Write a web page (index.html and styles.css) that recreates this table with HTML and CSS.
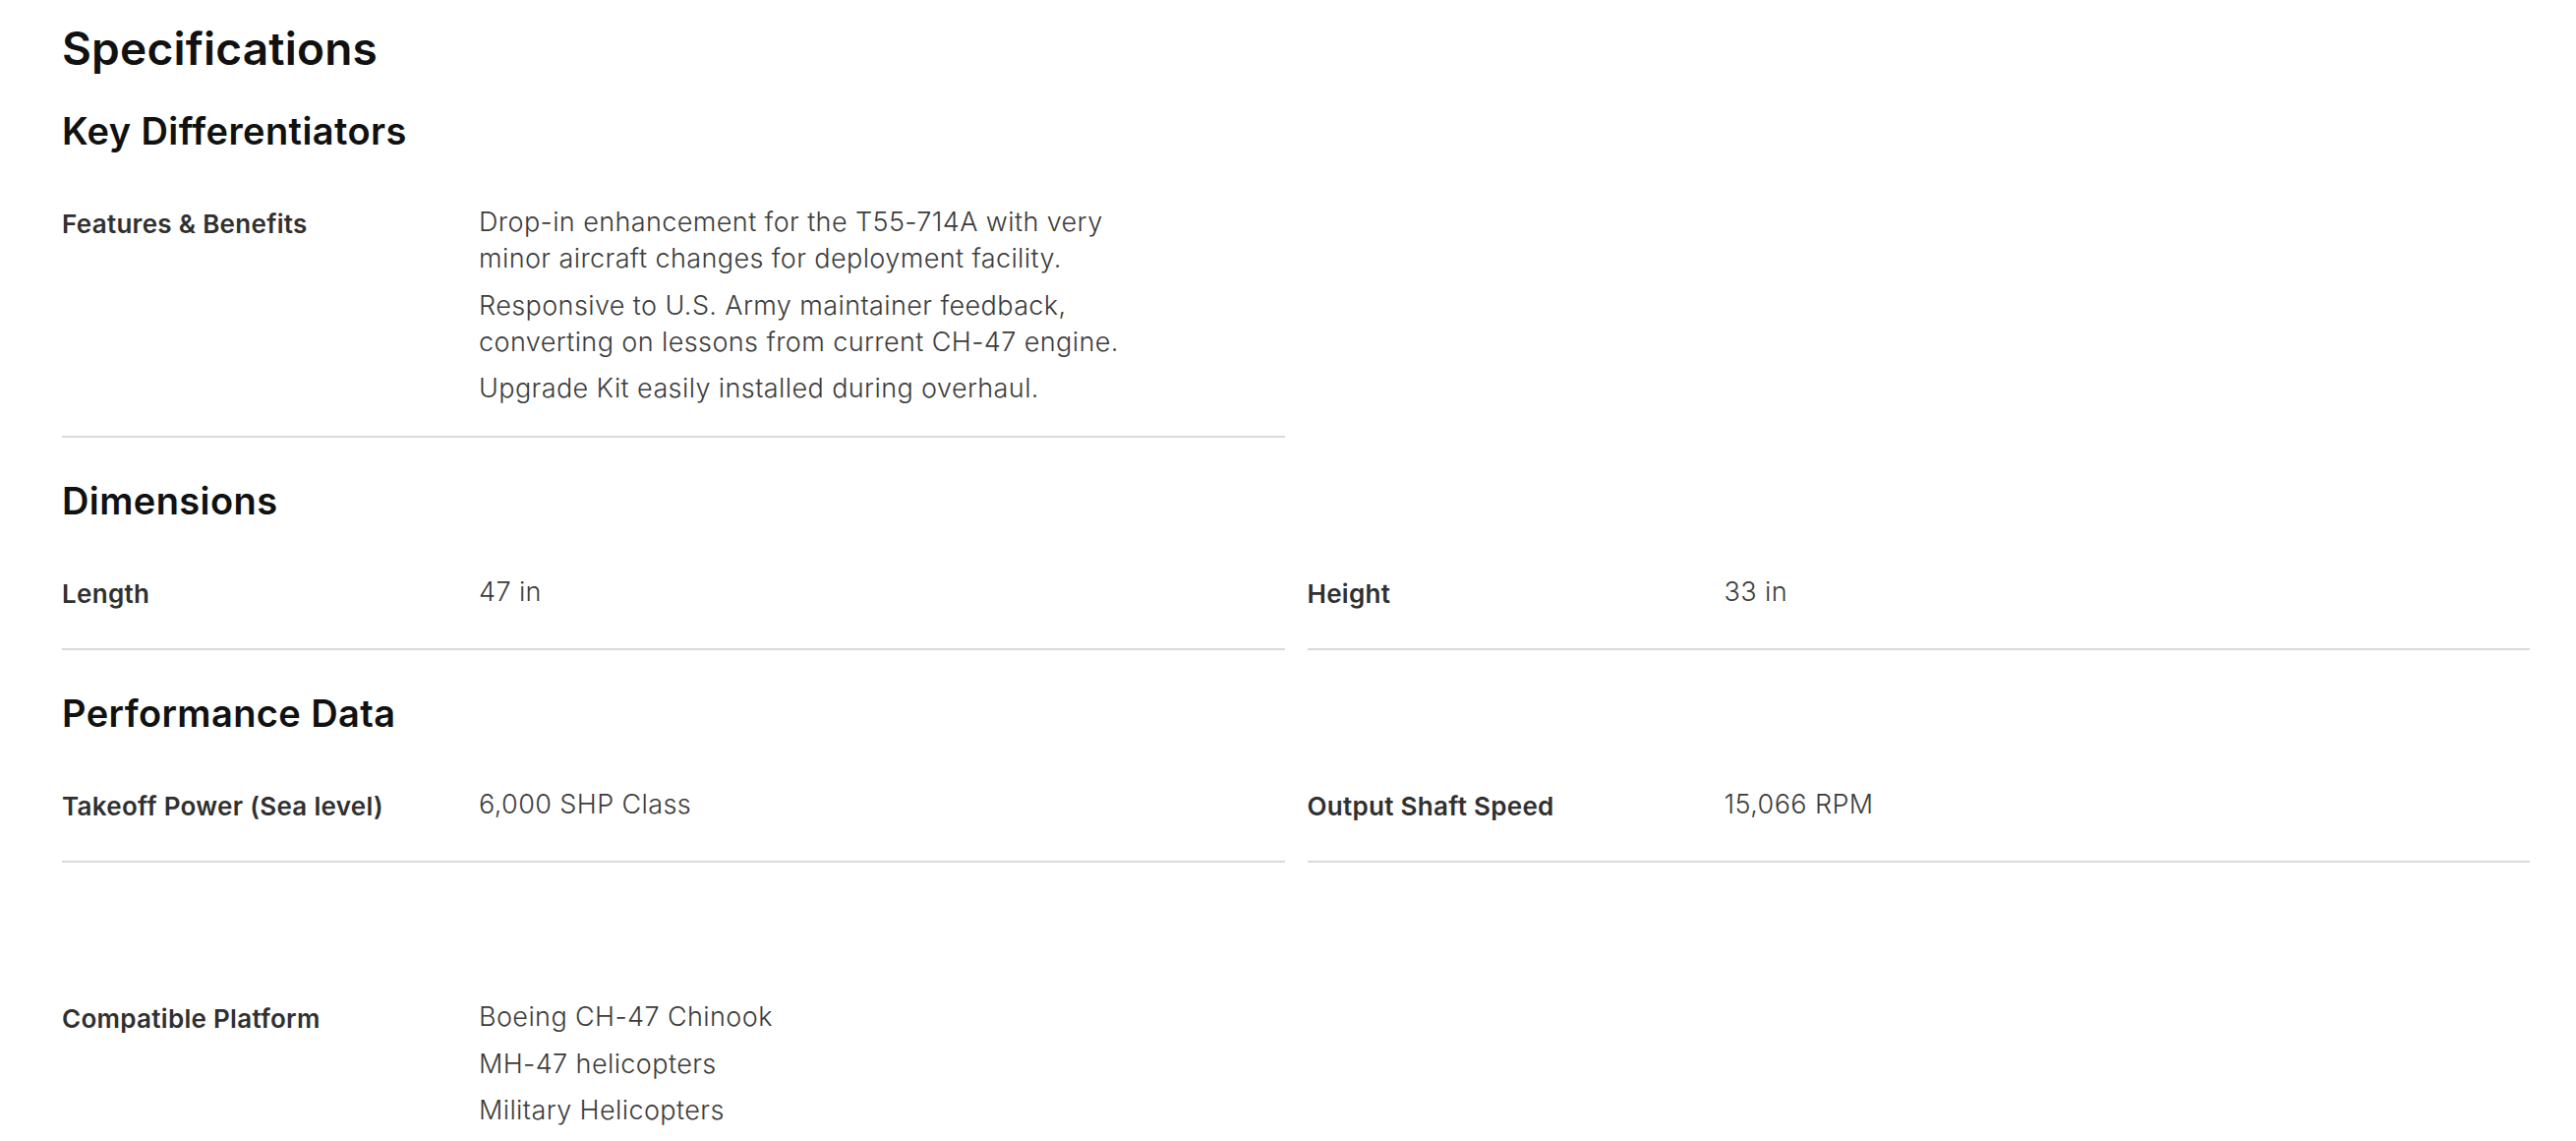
FILE: index.html
```html
<!DOCTYPE html>
<html lang="en">
<head>
<meta charset="utf-8">
<title>Specifications</title>
<link rel="stylesheet" href="styles.css">
</head>
<body>
<main class="specs">
  <h2 class="specs-title">Specifications</h2>

  <section class="spec-section">
    <h3 class="section-title">Key Differentiators</h3>
    <div class="spec-grid">
      <div class="spec-row">
        <div class="spec-label">Features &amp; Benefits</div>
        <div class="spec-value">
          <p>Drop-in enhancement for the T55-714A with very minor aircraft changes for deployment facility.</p>
          <p>Responsive to U.S. Army maintainer feedback, converting on lessons from current CH-47 engine.</p>
          <p>Upgrade Kit easily installed during overhaul.</p>
        </div>
      </div>
    </div>
  </section>

  <section class="spec-section">
    <h3 class="section-title">Dimensions</h3>
    <div class="spec-grid">
      <div class="spec-row">
        <div class="spec-label">Length</div>
        <div class="spec-value"><p>47 in</p></div>
      </div>
      <div class="spec-row">
        <div class="spec-label">Height</div>
        <div class="spec-value"><p>33 in</p></div>
      </div>
    </div>
  </section>

  <section class="spec-section">
    <h3 class="section-title">Performance Data</h3>
    <div class="spec-grid">
      <div class="spec-row">
        <div class="spec-label">Takeoff Power (Sea level)</div>
        <div class="spec-value"><p>6,000 SHP Class</p></div>
      </div>
      <div class="spec-row">
        <div class="spec-label">Output Shaft Speed</div>
        <div class="spec-value"><p>15,066 RPM</p></div>
      </div>
    </div>
  </section>

  <section class="spec-section">
    <h3 class="section-title section-title--empty"></h3>
    <div class="spec-grid">
      <div class="spec-row spec-row--open">
        <div class="spec-label">Compatible Platform</div>
        <div class="spec-value">
          <p>Boeing CH-47 Chinook</p>
          <p>MH-47 helicopters</p>
          <p>Military Helicopters</p>
        </div>
      </div>
    </div>
  </section>
</main>
</body>
</html>
```

FILE: styles.css
```css
html, body {
  margin: 0;
  padding: 0;
  background: #ffffff;
  height: 100%;
  overflow: hidden;
}

body {
  font-family: Inter, "Noto Sans", "Liberation Sans", sans-serif;
  color: #303030;
}

.specs {
  padding: 22px 47px 0 63px;
}

.specs-title {
  margin: 0;
  font-size: 46px;
  line-height: 55px;
  font-weight: 600;
  color: #111111;
  letter-spacing: 0.2px;
}

.spec-section {
  display: flex;
  flex-direction: column;
}

.section-title {
  margin: 34px 0 34px;
  font-size: 38px;
  line-height: 44px;
  height: 44px;
  font-weight: 600;
  color: #111111;
  letter-spacing: 0.4px;
}

.spec-section + .spec-section .section-title {
  margin-top: 42px;
}

.spec-grid {
  display: grid;
  grid-template-columns: 1fr 1fr;
  column-gap: 23px;
}

.spec-row {
  display: grid;
  grid-template-columns: 424px 1fr;
  box-sizing: border-box;
  min-height: 96px;
  padding: 18px 0 30px;
  border-bottom: 2px solid #d9d9d9;
}

.spec-row--open {
  border-bottom: none;
}

.spec-label {
  font-size: 26px;
  line-height: 37px;
  font-weight: 600;
  color: #303030;
  padding-top: 2px;
  letter-spacing: 0.3px;
}

.spec-value {
  max-width: 680px;
  font-size: 27px;
  line-height: 37px;
  font-weight: 300;
  color: #3c3c3c;
  letter-spacing: 0.4px;
}

.spec-value p {
  margin: 0 0 10.5px;
}

.spec-value p:last-child {
  margin-bottom: 0;
}
```
